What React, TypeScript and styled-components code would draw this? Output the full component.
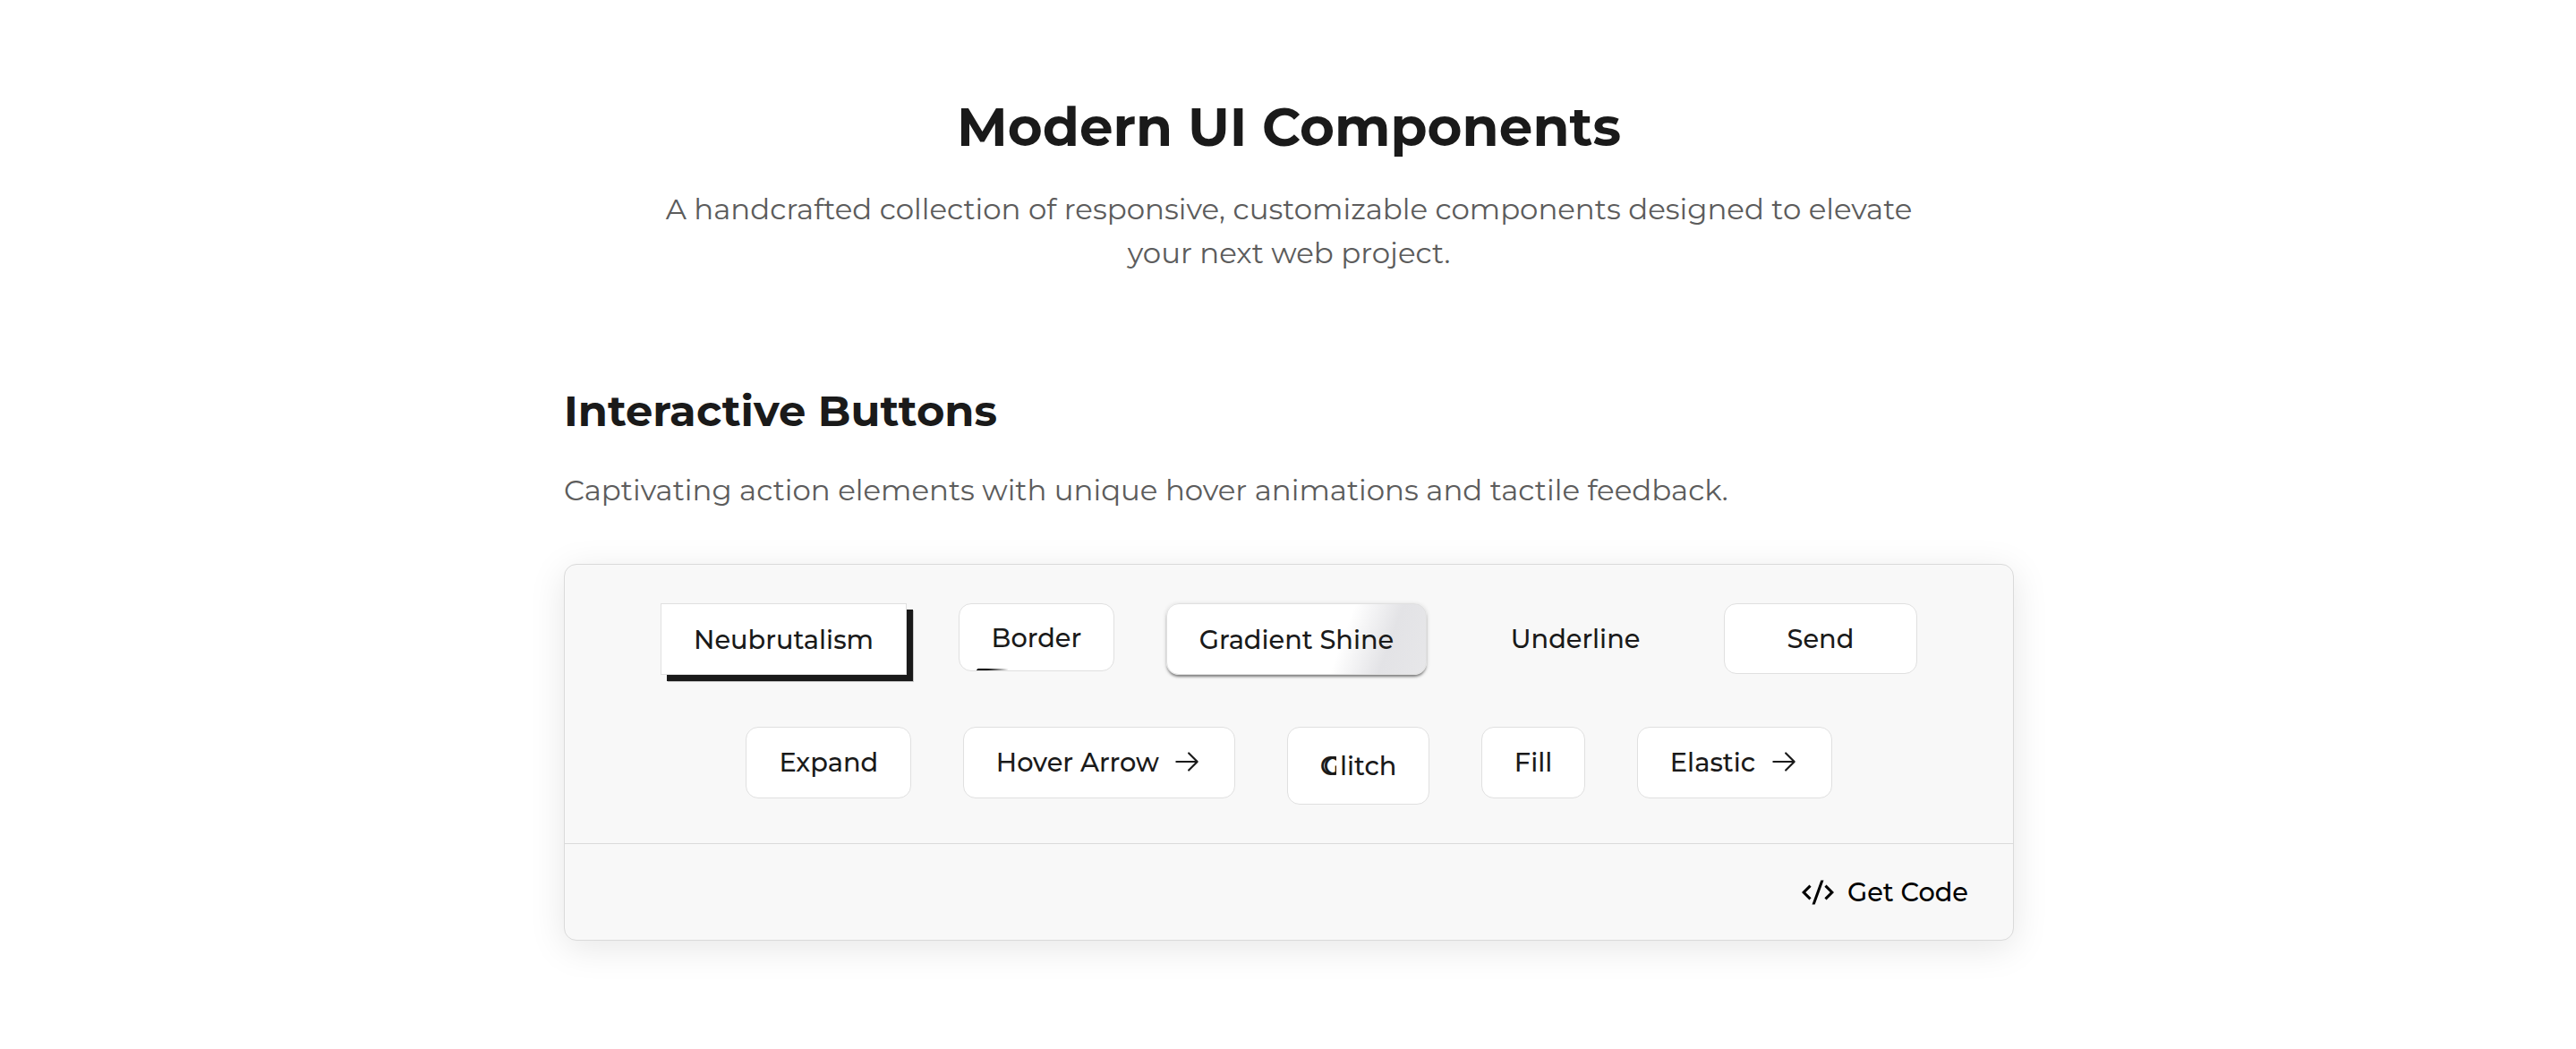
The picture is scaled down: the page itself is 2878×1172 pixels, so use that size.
import React from "react";
import styled, { createGlobalStyle } from "styled-components";
import { PiArrowRight } from "react-icons/pi";
import { RiCodeSSlashLine } from "react-icons/ri";

const GlobalStyle = createGlobalStyle`
  * { box-sizing: border-box; }
  body {
    margin: 0;
    background: #fff;
    color: #1a1a1a;
    font-family: "Montserrat", "Inter", sans-serif;
  }
`;

// Layout
const Page = styled.main`
  min-height: 100vh;
  padding: 103px 0 0 2px;
`;

const Header = styled.header`
  text-align: center;
`;

const Title = styled.h1`
  margin: 0;
  font-size: 59.5px;
  font-weight: 700;
  line-height: 78px;
`;

const Lead = styled.p`
  width: 1440px;
  margin: 28px auto 0;
  color: #5c5c5c;
  font-size: 32.4px;
  line-height: 49px;
`;

const Section = styled.section`
  width: 1620px;
  margin: 116px auto 0;
`;

const SectionTitle = styled.h2`
  margin: 0;
  font-size: 48px;
  font-weight: 700;
  line-height: 72px;
`;

const SectionText = styled.p`
  margin: 29px 0 0;
  color: #5c5c5c;
  font-size: 32.4px;
  line-height: 48px;
`;

const Card = styled.div`
  margin-top: 58px;
  background: #f8f8f8;
  border: 1px solid #dadada;
  border-radius: 14px;
  box-shadow: 0 8px 40px rgba(0, 0, 0, 0.1);
`;

const Showcase = styled.div`
  display: flex;
  flex-direction: column;
  gap: 58px;
  padding: 43px 0;
`;

const Row = styled.div`
  display: flex;
  justify-content: center;
  align-items: flex-start;
  gap: 57.6px;
`;

// Buttons
const Button = styled.button<{ $height?: number; $pad?: number; $lift?: number }>`
  display: flex;
  align-items: center;
  justify-content: center;
  gap: 14.4px;
  height: ${(p) => p.$height ?? 80}px;
  padding: 0 ${(p) => p.$pad ?? 36}px ${(p) => p.$lift ?? 0}px;
  background: #fff;
  color: #1a1a1a;
  border: 1px solid #e0e0e0;
  border-radius: 14px;
  font-family: inherit;
  font-size: 28.8px;
  font-weight: 500;
  white-space: nowrap;
`;

const NeuButton = styled(Button)`
  border-radius: 0;
  box-shadow: 7px 7px 0 #1a1a1a, 8px 8px 0 #c8c8c8;
`;

const BorderButton = styled(Button)`
  position: relative;
  overflow: hidden;

  &::after {
    content: "";
    position: absolute;
    left: 19px;
    bottom: 0;
    width: 36px;
    height: 2px;
    background: linear-gradient(90deg, #000 30%, transparent);
    clip-path: polygon(2px 0, 100% 0, 100% 100%, 0 100%);
  }
`;

const ShineButton = styled(Button)`
  background: linear-gradient(110deg, #fff 66%, #e3e3e6 83%, #e7e7e9);
  background-origin: border-box;
  box-shadow: 0 3px 3px -1px rgba(0, 0, 0, 0.45), 0 1px 5px rgba(0, 0, 0, 0.15);
`;

const PlainButton = styled(Button)`
  background: transparent;
  border-color: transparent;
`;

const GlitchText = styled.span`
  position: relative;

  &::before {
    content: "G";
    position: absolute;
    left: 3.6px;
    top: 0;
    width: 14.6px;
    overflow: hidden;
  }

  &::after {
    content: "";
    position: absolute;
    left: 18.3px;
    top: 0;
    width: 3px;
    height: 100%;
    background: #fff;
  }
`;

const Footer = styled.footer`
  display: flex;
  justify-content: flex-end;
  align-items: center;
  height: 108px;
  padding-right: 50px;
  border-top: 1px solid #dadada;
`;

const CodeButton = styled.button`
  display: flex;
  align-items: center;
  gap: 15px;
  padding: 0;
  background: none;
  border: 0;
  color: #000;
  font-family: inherit;
  font-size: 28.8px;
  font-weight: 500;
`;

const App: React.FC = () => {
  return (
    <Page>
      <GlobalStyle />
      <Header>
        <Title>Modern UI Components</Title>
        <Lead>
          A handcrafted collection of responsive, customizable components
          designed to elevate your next web project.
        </Lead>
      </Header>
      <Section>
        <SectionTitle>Interactive Buttons</SectionTitle>
        <SectionText>
          Captivating action elements with unique hover animations and tactile
          feedback.
        </SectionText>
        <Card>
          <Showcase>
            <Row>
              <NeuButton>Neubrutalism</NeuButton>
              <BorderButton $height={76}>Border</BorderButton>
              <ShineButton>Gradient Shine</ShineButton>
              <PlainButton $height={79} $pad={35}>
                Underline
              </PlainButton>
              <Button $height={79} $pad={69.6}>
                Send
              </Button>
            </Row>
            <Row>
              <Button $lift={2}>Expand</Button>
              <Button $lift={2}>
                Hover Arrow
                <PiArrowRight size={34} />
              </Button>
              <Button $height={87}>
                <GlitchText>Glitch</GlitchText>
              </Button>
              <Button $lift={2}>Fill</Button>
              <Button $lift={2}>
                Elastic
                <PiArrowRight size={34} />
              </Button>
            </Row>
          </Showcase>
          <Footer>
            <CodeButton>
              <RiCodeSSlashLine size={36} />
              Get Code
            </CodeButton>
          </Footer>
        </Card>
      </Section>
    </Page>
  );
};

export default App;
